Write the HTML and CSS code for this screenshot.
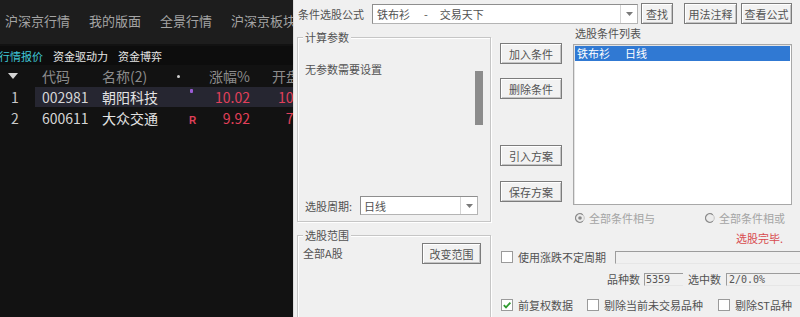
FILE: index.html
```html
<!DOCTYPE html>
<html lang="zh-CN">
<head>
<meta charset="utf-8">
<title>条件选股</title>
<link rel="stylesheet" href="styles.css">
</head>
<body>
<div class="screen">
  <section class="market">
    <nav class="topnav">
      <span>沪深京行情</span><span>我的版面</span><span>全景行情</span><span>沪深京板块</span>
    </nav>
    <div class="tabs">
      <span class="tab active">行情报价</span><span class="tab">资金驱动力</span><span class="tab">资金博弈</span>
    </div>
    <div class="qrow head">
      <span class="c-idx"><svg class="sort" width="10" height="6" viewBox="0 0 10 6"><polygon points="0,0 10,0 5,6" fill="#d4d4d4"/></svg></span>
      <span class="c-code">代码</span>
      <span class="c-name">名称(2)</span>
      <span class="c-mark"><i class="dot"></i></span>
      <span class="c-pct">涨幅%</span>
      <span class="c-open">开盘</span>
    </div>
    <div class="qrow sel">
      <span class="c-idx">1</span>
      <span class="c-code">002981</span>
      <span class="c-name">朝阳科技</span>
      <span class="c-mark"><i class="star"></i></span>
      <span class="c-pct up">10.02</span>
      <span class="c-open up">10.48</span>
    </div>
    <div class="qrow">
      <span class="c-idx">2</span>
      <span class="c-code">600611</span>
      <span class="c-name">大众交通</span>
      <span class="c-mark"><b class="rflag">R</b></span>
      <span class="c-pct up">9.92</span>
      <span class="c-open up">7.60</span>
    </div>
  </section>

  <section class="dialog">
    <div class="toprow">
      <span class="lbl">条件选股公式</span>
      <div class="combo main-combo">
        <span class="combo-text">铁布衫<span class="dash">-</span>交易天下</span>
        <span class="combo-arrow"><svg width="7" height="4" viewBox="0 0 7 4"><polygon points="0,0 7,0 3.5,4" fill="#7a7a7a"/></svg></span>
      </div>
      <button class="btn b-find">查找</button>
      <button class="btn b-usage">用法注释</button>
      <button class="btn b-view">查看公式</button>
    </div>

    <div class="body">
      <div class="leftcol">
        <div class="group params">
          <span class="legend">计算参数</span>
          <div class="params-top">
            <span class="noparam">无参数需要设置</span>
            <span class="thumb"></span>
          </div>
          <div class="period">
            <span class="lbl">选股周期:</span>
            <div class="combo period-combo">
              <span class="combo-text">日线</span>
              <span class="combo-arrow"><svg width="7" height="4" viewBox="0 0 7 4"><polygon points="0,0 7,0 3.5,4" fill="#7a7a7a"/></svg></span>
            </div>
          </div>
        </div>
        <div class="group range">
          <span class="legend">选股范围</span>
          <span class="range-text">全部A股</span>
          <button class="btn b-range">改变范围</button>
        </div>
      </div>

      <div class="rightcol">
        <div class="upper">
          <div class="btncol">
            <button class="btn side b1">加入条件</button>
            <button class="btn side b2">删除条件</button>
            <button class="btn side b3">引入方案</button>
            <button class="btn side b4">保存方案</button>
          </div>
          <div class="listcol">
            <span class="list-lbl">选股条件列表</span>
            <div class="listbox">
              <div class="item selected">铁布衫<span class="gap"></span>日线</div>
            </div>
          </div>
        </div>

        <div class="radios">
          <span class="radio r-and">
            <svg width="10" height="10" viewBox="0 0 10 10"><circle cx="5" cy="5" r="4.3" fill="#ececec" stroke="#c4c4c4"/><path d="M7.8 1.9 A4.3 4.3 0 1 0 7.8 8.1" fill="none" stroke="#8a8a8a" stroke-width="1.2"/><circle cx="5" cy="5" r="1.8" fill="#8a8a8a"/></svg>
            <span class="dis">全部条件相与</span>
          </span>
          <span class="radio r-or">
            <svg width="10" height="10" viewBox="0 0 10 10"><circle cx="5" cy="5" r="4.3" fill="#ececec" stroke="#c4c4c4"/><path d="M7.8 1.9 A4.3 4.3 0 1 0 7.8 8.1" fill="none" stroke="#8a8a8a" stroke-width="1.2"/></svg>
            <span class="dis">全部条件相或</span>
          </span>
        </div>

        <div class="status">选股完毕.</div>

        <div class="row1">
          <span class="chk"></span>
          <span class="chk-text">使用涨跌不定周期</span>
          <span class="edit e-period"></span>
        </div>

        <div class="counts">
          <span>品种数</span>
          <span class="edit e-total">5359</span>
          <span class="c-sel">选中数</span>
          <span class="edit e-sel">2/0.0%</span>
        </div>

        <div class="row3">
          <span class="chk checked"><svg width="10" height="10" viewBox="0 0 10 10"><path d="M1.8 5.2 L4 7.4 L8.4 2.6" fill="none" stroke="#2f9a2f" stroke-width="1.8"/></svg></span>
          <span class="chk-text">前复权数据</span>
          <span class="chk c2"></span>
          <span class="chk-text">剔除当前未交易品种</span>
          <span class="chk c3"></span>
          <span class="chk-text">剔除ST品种</span>
        </div>
      </div>
    </div>
  </section>
</div>
</body>
</html>
```

FILE: styles.css
```css
* { box-sizing: border-box; }
html, body { margin: 0; padding: 0; }
body {
  width: 800px;
  height: 317px;
  overflow: hidden;
  background: #121212;
}
.screen {
  display: flex;
  width: 800px;
  height: 317px;
  overflow: hidden;
}

/* ---------- market panel ---------- */
.market {
  width: 293px;
  flex: none;
  background: #121212;
  font-family: "Noto Sans CJK SC", "Noto Sans", sans-serif;
  overflow: hidden;
}
.topnav {
  height: 44px;
  background: #1d1d1d;
  display: flex;
  align-items: center;
  gap: 19px;
  padding: 0 0 4px 5px;
  font-size: 13px;
  color: #a4a4a4;
  white-space: nowrap;
}
.tabs {
  margin-top: 2px;
  height: 19px;
  background: #0d0d0d;
  display: flex;
  align-items: center;
  gap: 10px;
  margin-left: -1px;
  font-size: 11px;
  color: #e6e6e6;
  white-space: nowrap;
}
.tab.active { color: #3fc6d6; }

.qrow {
  display: grid;
  grid-template-columns: 42px 60px 68px 28px 52px 63px;
  height: 20px;
  margin-top: 1px;
  align-items: center;
  font-size: 14px;
  line-height: 20px;
  color: #d6d6d6;
  white-space: nowrap;
}
.qrow.head { color: #8c8c8c; }
.qrow.sel {
  background: linear-gradient(to right, transparent 35px, #262631 35px);
}
.c-idx { padding-left: 11px; color: #c8c8c8; }
.head .c-idx { padding-left: 8px; display: flex; align-items: center; }
.c-name { color: #e4e4e4; }
.head .c-name { color: #8c8c8c; }
.c-mark { padding-left: 20px; height: 20px; }
.head .c-mark { padding-left: 7px; display: flex; align-items: center; }
.dot {
  display: block;
  width: 3px;
  height: 3px;
  border-radius: 50%;
  background: #d0d0d0;
}
.star {
  display: block;
  width: 3px;
  height: 4px;
  margin-top: 2px;
  border-radius: 1px;
  background: #9b5cd6;
}
.rflag {
  display: block;
  font-family: "Liberation Sans", sans-serif;
  font-size: 10px;
  line-height: 10px;
  margin-top: 8px;
  margin-left: -1px;
  color: #e0405a;
  font-weight: bold;
}
.c-pct { text-align: right; }
.c-open { text-align: right; }
.head .c-open { text-align: left; padding-left: 22px; }
.up { color: #e2405a; }

/* ---------- dialog ---------- */
.dialog {
  flex: 1;
  min-width: 0;
  background: #f0f0f0;
  border-left: 1px solid #dedede;
  font-family: "Noto Sans CJK SC", "Noto Sans", sans-serif;
  font-size: 11px;
  line-height: 14px;
  color: #525252;
  white-space: nowrap;
  overflow: hidden;
}
.toprow {
  display: flex;
  align-items: center;
  height: 21px;
  margin-top: 3px;
  padding-left: 4px;
}
.btn {
  font-family: inherit;
  font-size: 11px;
  line-height: 14px;
  color: #525252;
  background: #f2f2f2;
  border: 1px solid #7c7c7c;
  box-shadow: inset 1px 1px 0 #ffffff, inset -1px -1px 0 #c4c4c4;
  padding: 0;
  margin: 0;
  height: 21px;
  text-align: center;
}
.b-find { margin-left: 3px; width: 32px; }
.b-usage { margin-left: 11px; width: 53px; }
.b-view { margin-left: 4px; width: 51px; }

.combo {
  display: flex;
  align-items: stretch;
  background: #ffffff;
  border: 1px solid #b4b4b4;
  border-top-color: #8e8e8e;
  border-left-color: #8e8e8e;
}
.combo-text { flex: 1; display: flex; align-items: center; padding-left: 4px; }
.combo-arrow {
  width: 17px;
  border-left: 1px solid #d4d4d4;
  display: flex;
  align-items: center;
  justify-content: center;
}
.main-combo { margin-left: 8px; width: 266px; height: 20px; }
.dash { margin: 0 12px 0 14px; }

.body {
  display: flex;
  margin-top: 2px;
}
.leftcol {
  width: 194px;
  margin-left: 3px;
  flex: none;
}
.group {
  position: relative;
  border: 1px solid #c6c6c6;
  box-shadow: inset 1px 1px 0 #ffffff, 1px 1px 0 #ffffff;
}
.legend {
  position: absolute;
  top: -8px;
  left: 5px;
  padding: 0 2px;
  background: #f0f0f0;
  line-height: 14px;
}
.params {
  margin-top: 11px;
  height: 185px;
  display: flex;
  flex-direction: column;
  padding: 24px 7px 6px 7px;
}
.params-top {
  display: flex;
  justify-content: space-between;
  align-items: flex-start;
}
.thumb {
  width: 8px;
  height: 54px;
  margin-top: 9px;
  background: #8c8c8c;
}
.period {
  margin-top: auto;
  display: flex;
  align-items: center;
}
.period-combo { margin-left: 8px; width: 118px; height: 19px; }
.period-combo .combo-text { padding-left: 3px; }

.range {
  margin-top: 13px;
  height: 90px;
  display: flex;
  justify-content: space-between;
  align-items: flex-start;
  padding: 7px 9px 0 5px;
}
.range-text { margin-top: 3px; }
.b-range { width: 59px; height: 21px; }

.rightcol {
  margin-left: 9px;
  flex: 1;
  min-width: 0;
  display: flex;
  flex-direction: column;
}
.upper { display: flex; height: 179px; }
.btncol {
  width: 62px;
  flex: none;
  display: flex;
  flex-direction: column;
}
.side { width: 62px; }
.b1 { margin-top: 17px; }
.b2 { margin-top: 14px; }
.b3 { margin-top: 46px; }
.b4 { margin-top: 15px; }

.listcol {
  margin-left: 11px;
  width: 219px;
  display: flex;
  flex-direction: column;
}
.list-lbl { padding-left: 2px; }
.listbox {
  margin-top: 4px;
  height: 161px;
  background: #ffffff;
  border: 1px solid #a8a8a8;
  box-shadow: inset 1px 1px 0 #e4e4e4;
  padding: 1px;
}
.item {
  height: 15px;
  line-height: 15px;
  padding-left: 2px;
}
.item.selected { background: #3079d3; color: #ffffff; }
.gap { display: inline-block; width: 15px; }

.radios {
  margin-top: 6px;
  height: 14px;
  display: flex;
  align-items: center;
  padding-left: 75px;
}
.radio { display: flex; align-items: center; gap: 4px; }
.r-or { margin-left: 50px; }
.dis { color: #a4a4a4; }

.status {
  margin-top: 6px;
  text-align: right;
  padding-right: 17px;
  color: #d84a4e;
}

.row1, .row3 {
  display: flex;
  align-items: center;
  height: 14px;
  padding-left: 1px;
}
.row1 { margin-top: 5px; }
.chk {
  width: 12px;
  height: 12px;
  flex: none;
  background: #ffffff;
  border: 1px solid #9a9a9a;
  display: flex;
  align-items: center;
  justify-content: center;
}
.chk-text { margin-left: 5px; }
.edit {
  height: 13px;
  background: #f0f0f0;
  border-top: 1px solid #9c9c9c;
  border-left: 1px solid #9c9c9c;
  border-bottom: 1px solid #e6e6e6;
  font-family: "DejaVu Sans Mono", "Liberation Mono", monospace;
  font-size: 10px;
  line-height: 11px;
  color: #555555;
}
.e-period { margin-left: 9px; flex: 1; }

.counts {
  margin-top: 8px;
  height: 14px;
  display: flex;
  align-items: center;
  padding-left: 107px;
}
.e-total { margin-left: 4px; width: 39px; padding-left: 1px; }
.c-sel { margin-left: 5px; }
.e-sel { margin-left: 5px; flex: 1; padding-left: 2px; }

.row3 { margin-top: 12px; }
.c2 { margin-left: 14px; }
.c3 { margin-left: 15px; }
```
